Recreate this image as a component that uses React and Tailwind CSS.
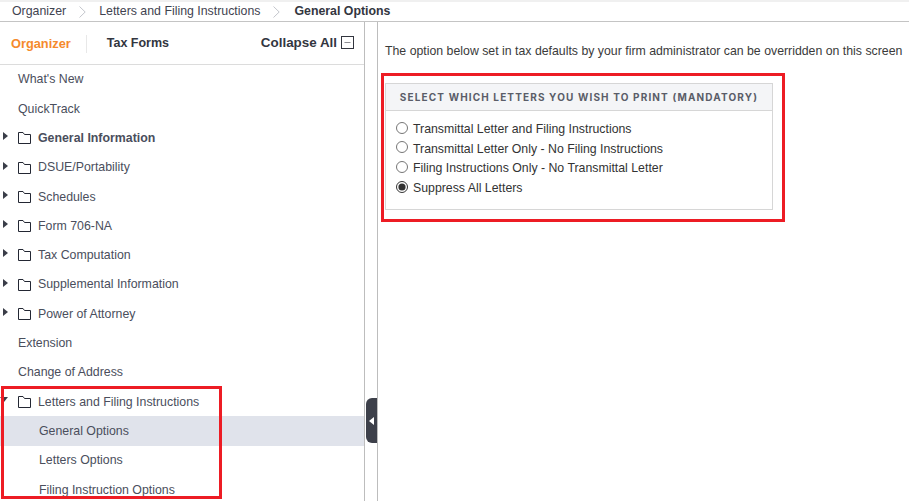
import { Minus } from "lucide-react";

const font = "font-['Liberation_Sans',Arial,sans-serif]";

function Folder() {
  return (
    <svg width="13" height="12" viewBox="0 0 13 12" className="shrink-0" fill="none">
      <path d="M0.5 11.5V0.5H5L6.5 2.5H12.5V11.5Z" stroke="#232733" strokeWidth="1" />
    </svg>
  );
}

function TreeRow({ label, folder, open, bold, active, child }) {
  return (
    <div className={`relative flex h-[29.3px] shrink-0 items-center pt-[0.6px] text-[12.35px] text-[#4a4e5c] ${active ? "bg-[#e0e3eb]" : ""} ${child ? "pl-[39px]" : "pl-[18px]"}`}>
      {folder && !open && (
        <span className="absolute left-[3px] top-[9px] h-0 w-0 border-y-[4px] border-l-[5px] border-y-transparent border-l-[#3a3d48]" />
      )}
      {folder && open && (
        <span className="absolute left-0 top-[10px] h-0 w-0 border-x-[4px] border-t-[5px] border-x-transparent border-t-[#3a3d48]" />
      )}
      {folder && <Folder />}
      <span className={`${folder ? "ml-[7px]" : ""} ${bold ? "font-bold" : ""}`}>{label}</span>
    </div>
  );
}

function Crumb({ children }) {
  return <span className="text-[#3f4350]">{children}</span>;
}

function Chevron() {
  return (
    <svg width="7" height="12" viewBox="0 0 7 12" fill="none" className="mx-[13px]">
      <path d="M0.5 0.5L6.2 6L0.5 11.5" stroke="#c4c6cc" strokeWidth="1" />
    </svg>
  );
}

const options = [
  "Transmittal Letter and Filing Instructions",
  "Transmittal Letter Only - No Filing Instructions",
  "Filing Instructions Only - No Transmittal Letter",
  "Suppress All Letters",
];

export default function App() {
  return (
    <div className={`relative h-[501px] w-[909px] overflow-hidden bg-white ${font}`}>
      {/* breadcrumb */}
      <div className="flex h-[22px] items-center border-b border-[#c4c4c4] border-t-2 border-t-[#f0f0f0] pl-[12px] text-[12.35px]">
        <Crumb>Organizer</Crumb>
        <Chevron />
        <Crumb>Letters and Filing Instructions</Crumb>
        <Chevron />
        <span className="ml-[1px] font-bold text-[#33363f]">General Options</span>
      </div>

      <div className="flex h-[479px]">
        {/* left tree */}
        <div className="flex w-[365px] shrink-0 flex-col border-r border-[#bdbdbd]">
          <div className="flex h-[42.7px] shrink-0 items-center border-b border-[#dcdcdc] pl-[11px] pr-[10px] pt-[2px]">
            <span className="text-[12.8px] font-bold text-[#f58a2c]">Organizer</span>
            <span className="ml-[15px] h-[18px] w-px bg-[#e8e8e8]" />
            <span className="ml-[20px] text-[12.5px] font-bold text-[#33363f]">Tax Forms</span>
            <span className="ml-auto mb-[2px] text-[13.4px] font-bold text-[#33363f]">Collapse All</span>
            <span className="mb-[3px] ml-[4px] flex h-[13px] w-[13px] items-center justify-center border border-[#33363f]">
              <Minus size={9} strokeWidth={1.5} color="#33363f" />
            </span>
          </div>
          <TreeRow label="What's New" />
          <TreeRow label="QuickTrack" />
          <TreeRow label="General Information" folder bold />
          <TreeRow label="DSUE/Portability" folder />
          <TreeRow label="Schedules" folder />
          <TreeRow label="Form 706-NA" folder />
          <TreeRow label="Tax Computation" folder />
          <TreeRow label="Supplemental Information" folder />
          <TreeRow label="Power of Attorney" folder />
          <TreeRow label="Extension" />
          <TreeRow label="Change of Address" />
          <TreeRow label="Letters and Filing Instructions" folder open />
          <TreeRow label="General Options" child active />
          <TreeRow label="Letters Options" child />
          <TreeRow label="Filing Instruction Options" child />
        </div>

        {/* gutter */}
        <div className="relative w-[13px] shrink-0 border-r border-[#bdbdbd]">
          <div className="absolute left-[1px] top-[376px] flex h-[45px] w-[11px] items-center justify-center rounded-l-[6px] bg-[#3d404a]">
            <span className="h-0 w-0 border-y-[4px] border-r-[5px] border-y-transparent border-r-white" />
          </div>
        </div>

        {/* content */}
        <div className="flex-1 pl-[7px] pt-[20px]">
          <p className="whitespace-nowrap text-[12.32px] text-[#3a3a3a]">
            The option below set in tax defaults by your firm administrator can be overridden on this screen
          </p>
          <div className="mt-[23px] w-[388px] border border-[#d6d6d6]">
            <div className="flex h-[27px] items-center justify-center border-b border-[#d6d6d6] bg-[#f4f5f7] font-['Inter',sans-serif] text-[10px] font-bold tracking-[1.14px] text-[#5a5d68]">
              SELECT WHICH LETTERS YOU WISH TO PRINT (MANDATORY)
            </div>
            <div className="flex h-[98px] flex-col pl-[10px] pt-[8px]">
              {options.map((o, i) => (
                <label key={o} className="flex h-[19.6px] items-center text-[12.32px] text-[#333]">
                  <input type="radio" name="letters" defaultChecked={i === 3} className="m-0 mb-[1px] h-[12px] w-[12px] -translate-y-px accent-[#333]" />
                  <span className="ml-[5px]">{o}</span>
                </label>
              ))}
            </div>
          </div>
        </div>
      </div>

      {/* annotation boxes */}
      <div className="absolute left-[1px] top-[386px] h-[113px] w-[221px] border-[3px] border-[#ed1c24]" />
      <div className="absolute left-[381px] top-[73px] h-[149px] w-[404px] border-[3px] border-[#ed1c24]" />
    </div>
  );
}
